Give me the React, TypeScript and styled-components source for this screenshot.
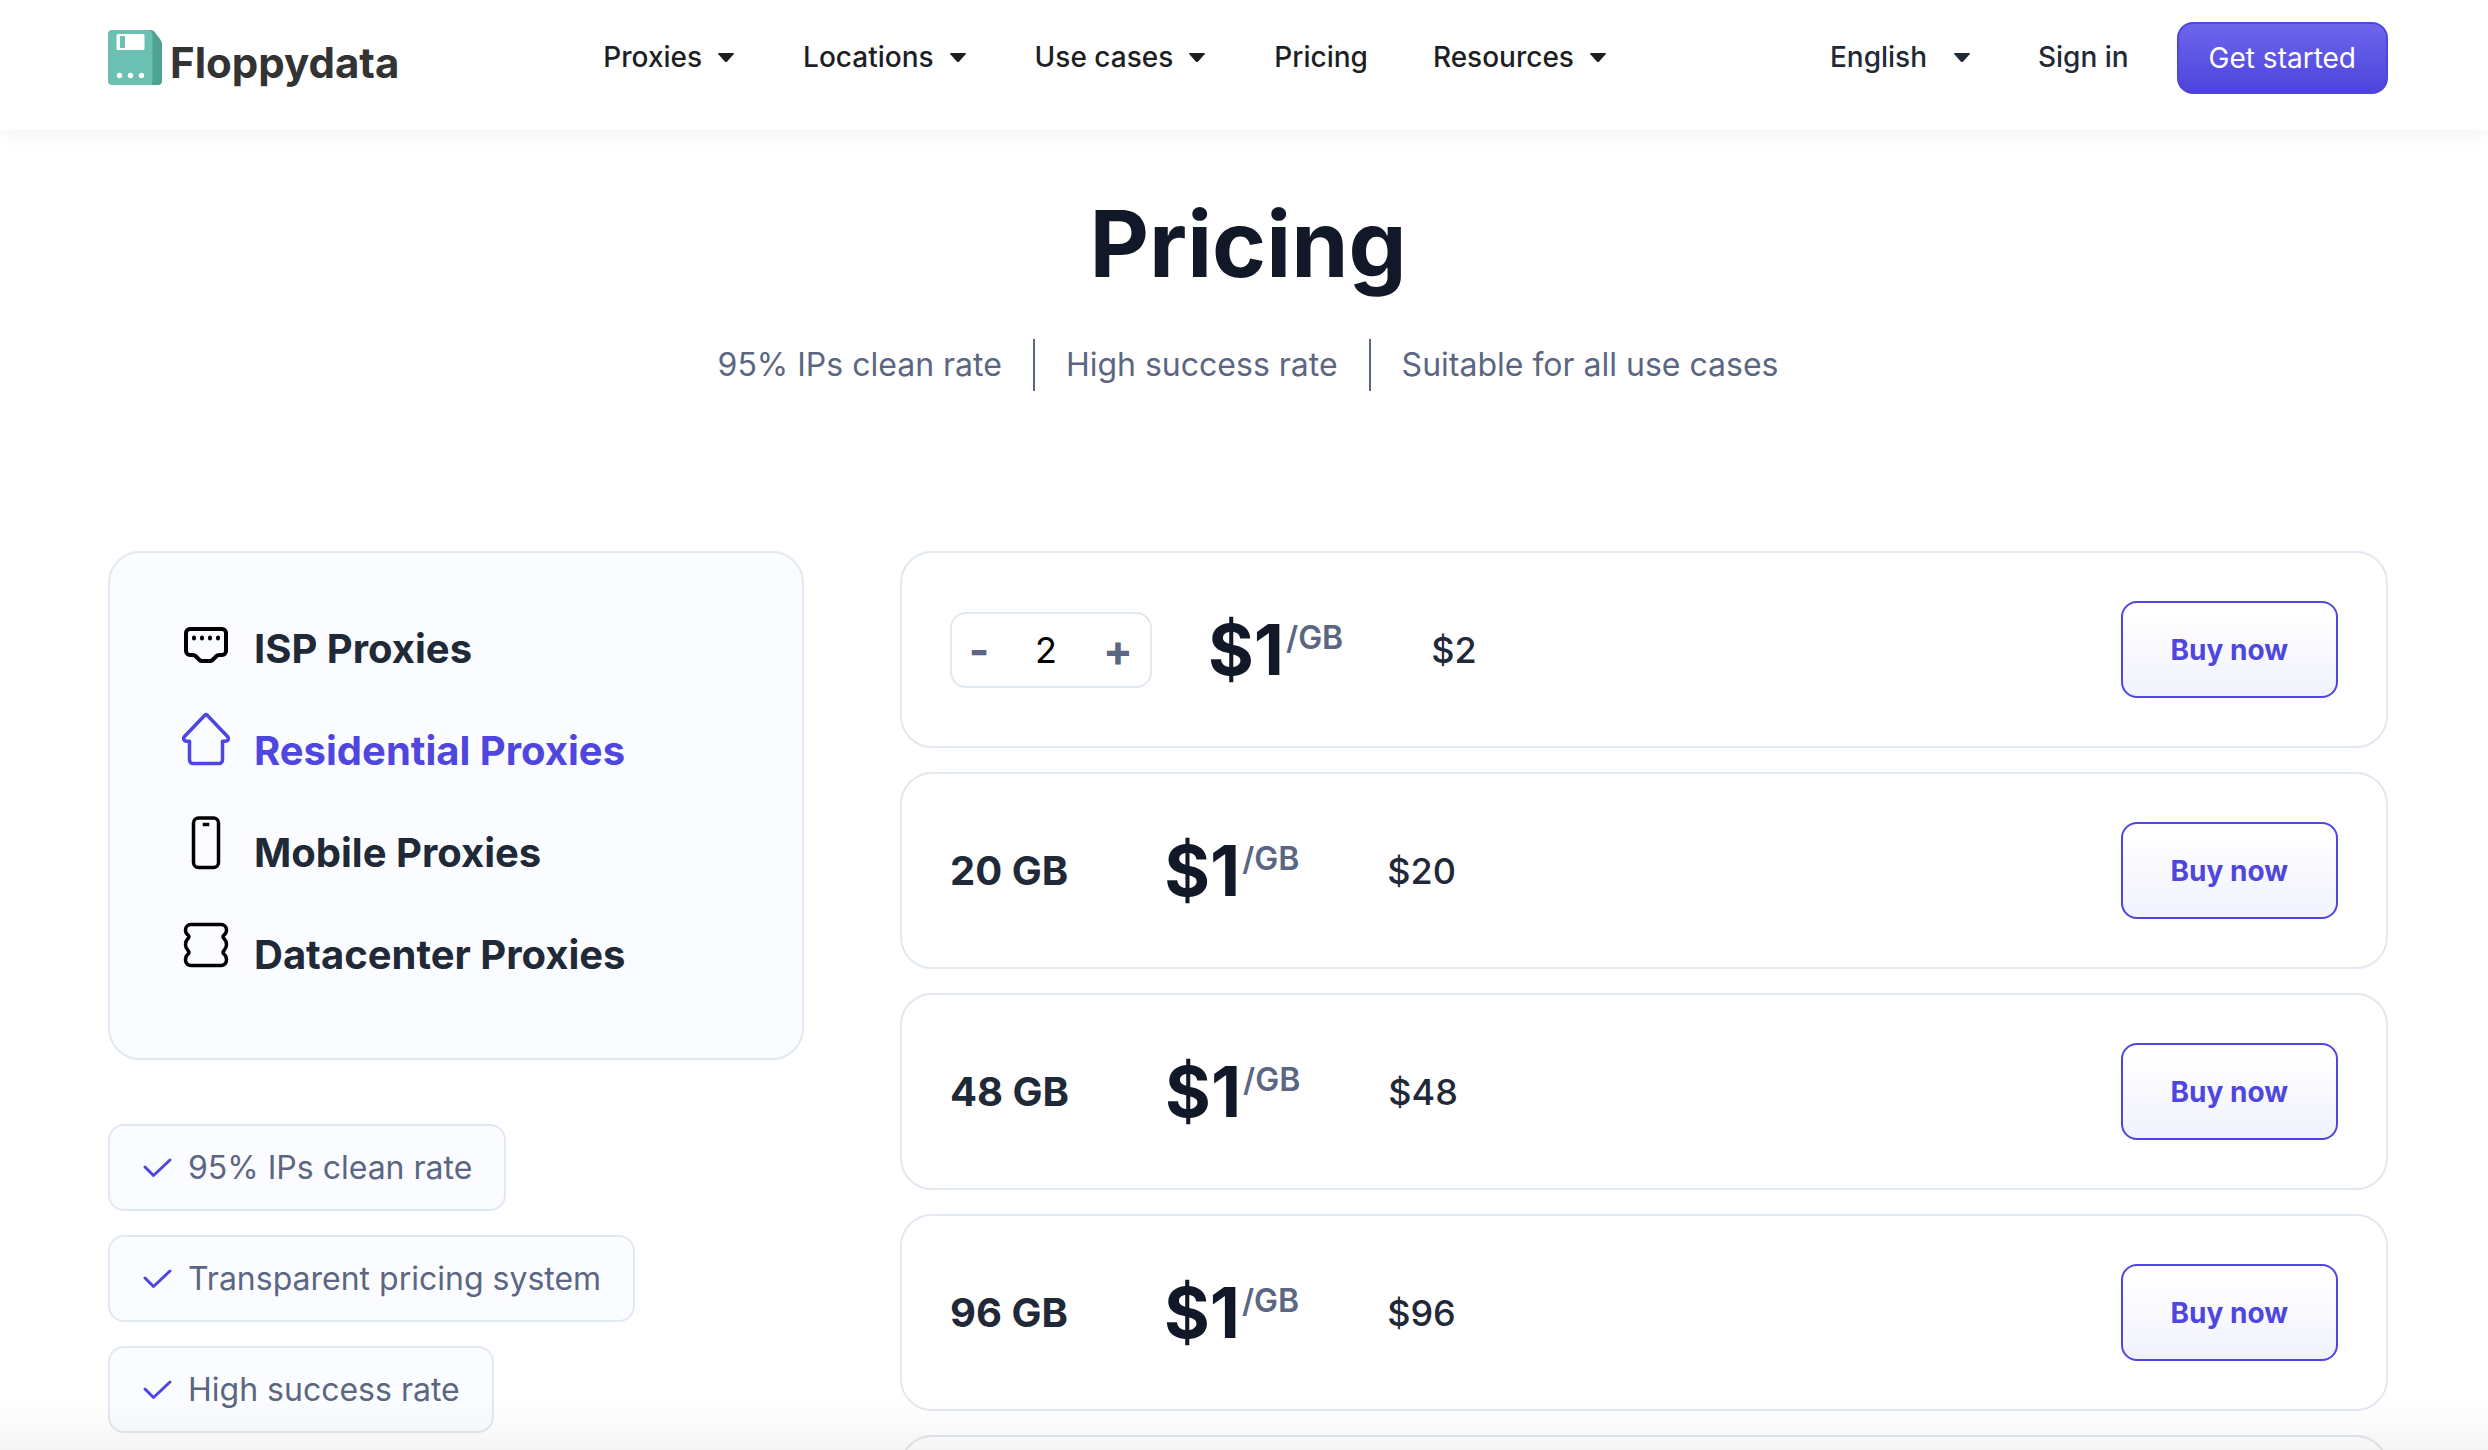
import React, { useState } from 'react';
import styled, { createGlobalStyle } from 'styled-components';

const color = {
  ink: '#111827',
  text: '#1f2937',
  nav: '#1d1f24',
  muted: '#5b6782',
  line: '#e2e8f0',
  accent: '#4f46e0',
  panel: '#fbfcff',
};

const GlobalStyle = createGlobalStyle`
  *, *::before, *::after { box-sizing: border-box; }
  body {
    margin: 0;
    background: #fff;
    color: ${color.text};
    font-family: Inter, "Liberation Sans", sans-serif;
  }
  button, input, select { font: inherit; color: inherit; }
  h1, p, ul { margin: 0; padding: 0; }
`;

const Page = styled.div`
  height: 100vh;
  overflow: hidden;
`;

const Header = styled.header`
  display: flex;
  align-items: center;
  padding: 22px 100px 36px 108px;
  background: #fff;
  box-shadow: 0 4px 20px rgba(0, 0, 0, 0.05);
`;

const Logo = styled.a`
  display: flex;
  align-items: center;
  gap: 8px;
  padding-bottom: 2px;
  color: #333;
  text-decoration: none;
`;

const LogoText = styled.span`
  padding-top: 12px;
  font-size: 42px;
  font-weight: 700;
  line-height: 52px;
`;

const Nav = styled.nav`
  display: flex;
  align-items: center;
  gap: 65px;
  margin-left: 204px;
  margin-right: auto;
`;

const NavButton = styled.button`
  display: flex;
  align-items: center;
  gap: 12px;
  padding: 0 0 2px;
  border: 0;
  background: none;
  color: ${color.nav};
  font-size: 28px;
  font-weight: 500;
  line-height: 40px;
  cursor: pointer;
`;

const NavLink = styled.a<{ $tone?: string }>`
  padding-bottom: 2px;
  color: ${(p) => p.$tone ?? color.nav};
  font-size: 28px;
  font-weight: 500;
  line-height: 40px;
  text-decoration: none;
`;

const Account = styled.div`
  display: flex;
  align-items: center;
  gap: 48px;
`;

const Language = styled.label`
  display: flex;
  align-items: center;
  gap: 22px;
  margin-right: 16px;
  padding-bottom: 2px;
  color: ${color.text};
`;

const LanguageSelect = styled.select`
  appearance: none;
  padding: 0;
  border: 0;
  background: none;
  font-size: 28px;
  font-weight: 500;
  line-height: 40px;
`;

const StartButton = styled.button`
  height: 72px;
  padding: 0 30px;
  border: 2px solid ${color.accent};
  border-radius: 16px;
  background: linear-gradient(#6d66ec, #4d44dc);
  color: #fff;
  font-size: 28px;
  line-height: 40px;
  cursor: pointer;
`;

const Main = styled.main`
  padding: 66px 100px 0 108px;
`;

const Title = styled.h1`
  color: ${color.ink};
  font-size: 92px;
  font-weight: 700;
  line-height: 96px;
  text-align: center;
`;

const Facts = styled.ul`
  display: flex;
  justify-content: center;
  margin: 47px 0 160px;
  list-style: none;
`;

const Fact = styled.li`
  padding: 0 31px;
  color: ${color.muted};
  font-size: 32px;
  line-height: 52px;

  & + & {
    border-left: 2px solid ${color.muted};
  }
`;

const Columns = styled.div`
  display: grid;
  grid-template-columns: 29fr 62fr;
  align-items: start;
  gap: 96px;
`;

const Aside = styled.aside`
  display: flex;
  flex-direction: column;
  gap: 64px;
`;

const Plans = styled.nav`
  display: flex;
  flex-direction: column;
  padding: 44px 72px 53px;
  border: 2px solid ${color.line};
  border-radius: 32px;
  background: ${color.panel};
`;

const PlanButton = styled.button<{ $active: boolean }>`
  display: flex;
  align-items: center;
  gap: 24px;
  height: 102px;
  padding: 0;
  border: 0;
  background: none;
  color: ${(p) => (p.$active ? color.accent : color.text)};
  font-size: 40px;
  font-weight: 700;
  text-align: left;
  cursor: pointer;

  svg {
    color: ${(p) => (p.$active ? color.accent : '#000')};
  }
`;

const Tags = styled.ul`
  display: flex;
  flex-direction: column;
  align-items: flex-start;
  gap: 24px;
  list-style: none;
`;

const Tag = styled.li`
  display: flex;
  align-items: center;
  gap: 14px;
  height: 87px;
  padding: 0 32px;
  border: 2px solid ${color.line};
  border-radius: 16px;
  background: ${color.panel};
  color: ${color.muted};
  font-size: 32px;
`;

const Offers = styled.section`
  display: flex;
  flex-direction: column;
  gap: 24px;
`;

const Offer = styled.article`
  display: flex;
  align-items: center;
  min-height: 197px;
  padding: 48px;
  border: 2px solid ${color.line};
  border-radius: 32px;
  background: #fff;
`;

const Volume = styled.div`
  padding-right: 96px;
  font-size: 40px;
  font-weight: 700;
`;

const Stepper = styled.div`
  display: flex;
  align-items: center;
  width: 202px;
  height: 76px;
  margin-right: 56px;
  border: 2px solid ${color.line};
  border-radius: 16px;
`;

const StepButton = styled.button<{ $width: number }>`
  width: ${(p) => p.$width}px;
  flex: none;
  padding: 0;
  border: 0;
  background: none;
  color: ${color.muted};
  font-size: 44px;
  font-weight: 700;
  line-height: 72px;
  cursor: pointer;
`;

const StepInput = styled.input`
  flex: 1;
  min-width: 0;
  padding: 0;
  border: 0;
  background: none;
  color: #000;
  font-size: 36px;
  text-align: center;
`;

const Price = styled.div`
  display: flex;
  align-items: center;
  gap: 2px;
  color: ${color.ink};
  font-size: 70px;
  font-weight: 700;
  line-height: 76px;
`;

const Unit = styled.span`
  padding-bottom: 24px;
  color: ${color.muted};
  font-size: 32px;
  font-weight: 600;
  line-height: 40px;
`;

const Total = styled.div`
  margin-left: 88px;
  margin-right: auto;
  font-size: 36px;
  font-weight: 500;
`;

const BuyButton = styled.button`
  height: 97px;
  padding: 0 48px;
  border: 2px solid ${color.accent};
  border-radius: 16px;
  background: linear-gradient(#fff 10%, #f1f2fd);
  color: ${color.accent};
  font-size: 28px;
  font-weight: 700;
  cursor: pointer;
`;

const BottomFade = styled.div`
  position: fixed;
  right: 0;
  bottom: 0;
  left: 0;
  height: 50px;
  background: linear-gradient(rgba(0, 0, 0, 0), rgba(0, 0, 0, 0.04));
  pointer-events: none;
`;

const Caret = () => (
  <svg width="24" height="24" viewBox="0 0 24 24" fill="currentColor" aria-hidden="true">
    <path d="M5 8h14q1.500 0 .6 1.200l-6.400 7.200q-1.200 1.200-2.400 0L4.400 9.200Q3.500 8 5 8z" />
  </svg>
);

const FloppyMark = () => (
  <svg width="54" height="55" viewBox="0 0 54 55" aria-hidden="true">
    <path d="M38 0h5q2 0 3.500 1.700L52 9q2 2.500 2 5v37q0 4-4 4H38z" fill="#4fa291" />
    <path d="M4 0h37q3.500 1 3.500 5v46q0 4-2.500 4H4q-4 0-4-4V4q0-4 4-4z" fill="#6ac1b1" />
    <rect x="8.500" y="4" width="28" height="16" rx="1.500" fill="#fff" />
    <rect x="12" y="6" width="5" height="12" rx="0.500" fill="#6ac1b1" />
    <circle cx="11.500" cy="45.500" r="2.700" fill="#fff" />
    <circle cx="22.500" cy="45.500" r="2.700" fill="#fff" />
    <circle cx="33.500" cy="45.500" r="2.700" fill="#fff" />
  </svg>
);

const Glyph = ({ stroke = 3.5, children }: { stroke?: number; children: React.ReactNode }) => (
  <svg
    width="48"
    height="80"
    viewBox="0 0 48 80"
    fill="none"
    stroke="currentColor"
    strokeWidth={stroke}
    strokeLinejoin="round"
    strokeLinecap="round"
    aria-hidden="true"
  >
    {children}
  </svg>
);

const plans = [
  {
    name: 'ISP Proxies',
    icon: (
      <Glyph stroke={4}>
        <path d="M8 21h32a4 4 0 0 1 4 4v18a4 4 0 0 1-4 4h-3q-1.500 0-2.500 1l-4 4q-1 1-2.500 1h-8q-1.500 0-2.500-1l-4-4q-1-1-2.500-1H8a4 4 0 0 1-4-4V25a4 4 0 0 1 4-4z" />
        <path d="M12 29.500v1M20 29.500v1M28 29.500v1M36 29.500v1" />
      </Glyph>
    ),
  },
  {
    name: 'Residential Proxies',
    icon: (
      <Glyph>
        <path d="M22.800 5.200q1.200-1.200 2.400 0L45.500 26.500q1.500 2 .5 3.500-.8 1.200-2.500 1.200h-3V50a3.500 3.500 0 0 1-3.500 3.500H11A3.500 3.500 0 0 1 7.500 50V31.200h-3Q2.800 31.200 2 30q-1-1.500.5-3.500z" />
      </Glyph>
    ),
  },
  {
    name: 'Mobile Proxies',
    icon: (
      <Glyph>
        <rect x="11.500" y="6" width="25" height="49.500" rx="5" />
        <path d="M22.500 12.500h3" strokeLinecap="square" />
      </Glyph>
    ),
  },
  {
    name: 'Datacenter Proxies',
    icon: (
      <Glyph>
        <path d="M9 10.500h30a5.500 5.500 0 0 1 5.500 5.500q0 3.500-2.500 5-2 1.500 0 3.500 2.500 2.500 2.500 6t-2.500 6q-2 2 0 3.500 2.500 2 2.500 6a5.500 5.500 0 0 1-5.500 5.500H9A5.500 5.500 0 0 1 3.500 46q0-4 2.500-6 2-1.500 0-3.500-2.500-2.500-2.500-6t2.500-6q2-2 0-3.500-2.500-1.500-2.500-5A5.500 5.500 0 0 1 9 10.500z" />
      </Glyph>
    ),
  },
];

const CheckIcon = () => (
  <svg width="32" height="32" viewBox="0 0 32 32" fill="none" stroke={color.accent} strokeWidth="3" strokeLinecap="round" strokeLinejoin="round" aria-hidden="true">
    <path d="M3 15l8.500 8.500L28 8" />
  </svg>
);

const facts = ['95% IPs clean rate', 'High success rate', 'Suitable for all use cases'];
const tags = ['95% IPs clean rate', 'Transparent pricing system', 'High success rate'];
const volumes = [20, 48, 96];

const Rate = () => (
  <Price>
    $1<Unit>/GB</Unit>
  </Price>
);

export default function App() {
  const [active, setActive] = useState('Residential Proxies');
  const [amount, setAmount] = useState(2);

  return (
    <Page>
      <GlobalStyle />
      <Header>
        <Logo href="#">
          <FloppyMark />
          <LogoText>Floppydata</LogoText>
        </Logo>
        <Nav aria-label="Main">
          <NavButton>Proxies<Caret /></NavButton>
          <NavButton>Locations<Caret /></NavButton>
          <NavButton>Use cases<Caret /></NavButton>
          <NavLink href="#pricing">Pricing</NavLink>
          <NavButton>Resources<Caret /></NavButton>
        </Nav>
        <Account>
          <Language>
            <LanguageSelect aria-label="Language">
              <option>English</option>
            </LanguageSelect>
            <Caret />
          </Language>
          <NavLink href="#sign-in" $tone={color.text}>Sign in</NavLink>
          <StartButton>Get started</StartButton>
        </Account>
      </Header>

      <Main>
        <Title>Pricing</Title>
        <Facts>
          {facts.map((fact) => (
            <Fact key={fact}>{fact}</Fact>
          ))}
        </Facts>

        <Columns>
          <Aside>
            <Plans aria-label="Proxy types">
              {plans.map(({ name, icon }) => (
                <PlanButton key={name} $active={name === active} onClick={() => setActive(name)}>
                  {icon}
                  {name}
                </PlanButton>
              ))}
            </Plans>
            <Tags>
              {tags.map((tag) => (
                <Tag key={tag}>
                  <CheckIcon />
                  {tag}
                </Tag>
              ))}
            </Tags>
          </Aside>

          <Offers>
            <Offer>
              <Stepper>
                <StepButton $width={54} aria-label="Less" onClick={() => setAmount(Math.max(1, amount - 1))}>-</StepButton>
                <StepInput
                  aria-label="Gigabytes"
                  inputMode="numeric"
                  value={amount}
                  onChange={(e) => setAmount(Number(e.target.value) || 1)}
                />
                <StepButton $width={64} aria-label="More" onClick={() => setAmount(amount + 1)}>+</StepButton>
              </Stepper>
              <Rate />
              <Total>${amount}</Total>
              <BuyButton>Buy now</BuyButton>
            </Offer>
            {volumes.map((gb) => (
              <Offer key={gb}>
                <Volume>{gb} GB</Volume>
                <Rate />
                <Total>${gb}</Total>
                <BuyButton>Buy now</BuyButton>
              </Offer>
            ))}
            <Offer />
          </Offers>
        </Columns>
      </Main>
      <BottomFade />
    </Page>
  );
}
